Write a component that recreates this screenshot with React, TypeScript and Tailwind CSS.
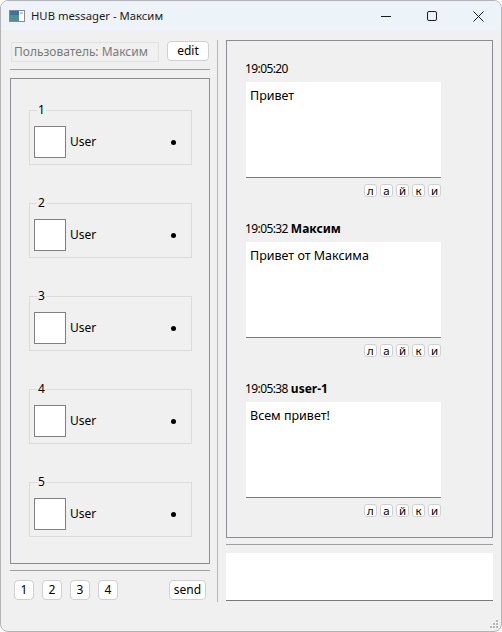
import React from "react";

const font = { fontFamily: '"Noto Sans", "Open Sans", sans-serif' };

function GroupBox({ n }: { n: number }) {
  return (
    <div className="relative ml-[18px] w-[163px] h-[55px] border border-[#dcdcdc] shrink-0">
      <span className="absolute left-[7px] top-[-9px] px-[1px] bg-[#f0f0f0] text-[12px] leading-[16px] text-black">{n}</span>
      <div className="flex items-center mt-[15px] ml-[4px]">
        <div className="w-[32px] h-[32px] bg-white border border-[#7f7f7f]" />
        <span className="ml-[4px] text-[12px] leading-[16px] text-black">User</span>
        <div className="ml-auto mr-[15px] w-[5px] h-[5px] rounded-full bg-black" />
      </div>
    </div>
  );
}

function Reactions() {
  return (
    <div className="flex justify-end gap-[3px] mt-[6px] w-[195px] ml-[19px]">
      {["л", "а", "й", "к", "и"].map((c, i) => (
        <div
          key={i}
          className="w-[13px] h-[13px] bg-white border border-[#d0d0d0] rounded-[3px] flex items-center justify-center text-[11.5px] leading-none text-black"
        >
          {c}
        </div>
      ))}
    </div>
  );
}

function Message({ time, name, text, first }: { time: string; name?: string; text: string; first?: boolean }) {
  return (
    <div className={first ? "" : "mt-[24px]"}>
      <div className="ml-[18px] h-[16px] flex items-center text-[12px] leading-[16px] text-black">
        <span className="tracking-[-0.6px]">{time}</span>
        {name && <span className="ml-[3px] font-bold text-[12px]">{name}</span>}
      </div>
      <div className="ml-[19px] mt-[5px] w-[195px] h-[96px] bg-white border-b border-[#7a7a7a] px-[4px] pt-[6px] text-[12.5px] leading-[16px] text-black">
        {text}
      </div>
      <Reactions />
    </div>
  );
}

export default function App() {
  return (
    <div
      className="w-[502px] h-[632px] box-border border border-[#b4b4b4] rounded-[8px] overflow-hidden bg-[#f0f0f0] relative"
      style={font}
    >
      {/* title bar */}
      <div className="h-[30px] bg-[#eef3f9] flex items-center relative">
        <svg className="ml-[8px]" width="16" height="12" viewBox="0 0 16 12">
          <rect x="0.5" y="0.5" width="15" height="11" fill="#ffffff" stroke="#8a8a8a" />
          <rect x="1" y="1" width="9" height="10" fill="#4f8f8f" />
          <rect x="1" y="1" width="9" height="4" fill="#3f6fa8" />
          <rect x="11" y="2" width="3" height="2" fill="#c8c8c8" />
        </svg>
        <span className="ml-[6px] text-[11.3px] leading-[16px] text-[#1b1b1b]">HUB messager - Максим</span>
        <div className="ml-auto flex h-full">
          <div className="w-[46px] h-full flex items-center justify-center">
            <div className="w-[10px] h-px bg-[#1b1b1b]" />
          </div>
          <div className="w-[46px] h-full flex items-center justify-center">
            <div className="w-[10px] h-[10px] border border-[#1b1b1b] rounded-[2px]" />
          </div>
          <div className="w-[46px] h-full flex items-center justify-center">
            <svg width="11" height="11" viewBox="0 0 11 11">
              <path d="M0.5 0.5 L10.5 10.5 M10.5 0.5 L0.5 10.5" stroke="#1b1b1b" strokeWidth="1" />
            </svg>
          </div>
        </div>
      </div>

      {/* content */}
      <div className="flex">
        {/* left column */}
        <div className="ml-[9px] w-[200px] flex flex-col">
          <div className="mt-[10px] flex items-start h-[21px]">
            <div className="ml-[1px] mt-[1px] w-[148px] h-[20px] border border-[#e2e2e2] bg-[#f0f0f0] pl-[2px] text-[12px] leading-[18px] text-[#7a7a7a] whitespace-nowrap overflow-hidden">
              Пользователь: Максим
            </div>
            <button className="ml-[8px] w-[42px] h-[20px] bg-white border border-[#d0d0d0] rounded-[4px] text-[12px] leading-[16px] text-black">
              edit
            </button>
          </div>
          <div className="mt-[7px] h-px bg-[#a0a0a0]" />
          <div className="mt-[8px] h-[486px] border border-[#8b8b96] flex flex-col pt-[31px] gap-[38px]">
            {[1, 2, 3, 4, 5].map((n) => (
              <GroupBox key={n} n={n} />
            ))}
          </div>
          <div className="mt-[6px] h-px bg-[#a0a0a0]" />
          <div className="mt-[9px] flex items-center">
            <div className="ml-[4px] flex gap-[8px]">
              {["1", "2", "3", "4"].map((b) => (
                <button
                  key={b}
                  className="w-[20px] h-[20px] bg-white border border-[#d0d0d0] rounded-[4px] text-[12px] leading-[16px] text-black"
                >
                  {b}
                </button>
              ))}
            </div>
            <button className="ml-auto mr-[4px] w-[37px] h-[20px] bg-white border border-[#d0d0d0] rounded-[4px] text-[12px] leading-[16px] text-black">
              send
            </button>
          </div>
        </div>

        {/* splitter */}
        <div className="ml-[7px] mt-[9px] w-px h-[562px] bg-[#b8b8b8]" />

        {/* right column */}
        <div className="ml-[8px] w-[267px] flex flex-col">
          <div className="mt-[9px] h-[498px] border border-[#8b8b96] pt-[20px]">
            <Message first time="19:05:20" text="Привет" />
            <Message time="19:05:32" name="Максим" text="Привет от Максима" />
            <Message time="19:05:38" name="user-1" text="Всем привет!" />
          </div>
          <div className="mt-[6px] h-px bg-[#a0a0a0]" />
          <div className="mt-[8px] h-[48px] bg-white border-b border-[#7a7a7a]" />
        </div>
      </div>

      {/* size grip */}
      <svg className="absolute right-[3px] bottom-[3px]" width="8" height="8" viewBox="0 0 8 8">
        <rect x="6" y="0" width="2" height="2" fill="#b8b8b8" />
        <rect x="3" y="3" width="2" height="2" fill="#b8b8b8" />
        <rect x="6" y="3" width="2" height="2" fill="#b8b8b8" />
        <rect x="0" y="6" width="2" height="2" fill="#b8b8b8" />
        <rect x="3" y="6" width="2" height="2" fill="#b8b8b8" />
        <rect x="6" y="6" width="2" height="2" fill="#b8b8b8" />
      </svg>
    </div>
  );
}
